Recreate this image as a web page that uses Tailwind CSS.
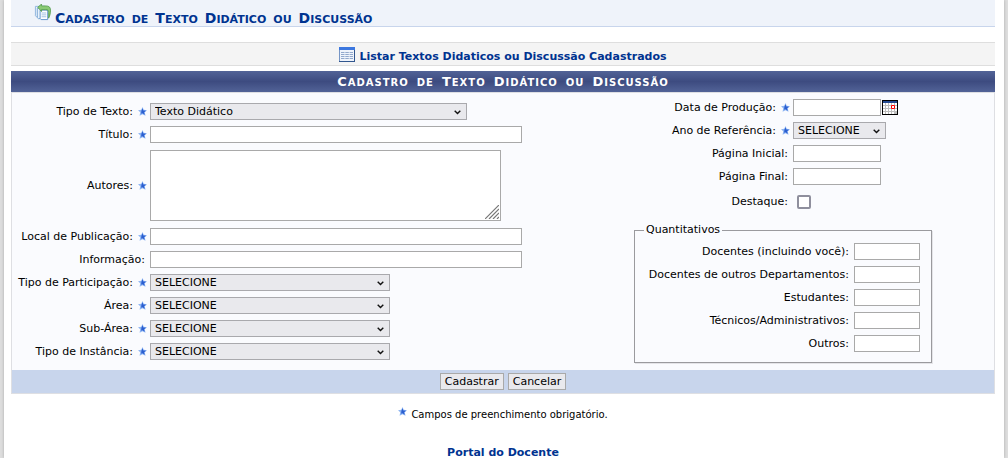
<!DOCTYPE html>
<html lang="pt-BR">
<head>
<meta charset="utf-8">
<meta name="viewport" content="width=device-width, initial-scale=1">
<title>Cadastro de Texto Didático ou Discussão</title>
<script src="https://cdn.jsdelivr.net/npm/@tailwindcss/browser@4"></script>
</head>
<body class="bg-[#dedede] font-[Verdana,'DejaVu_Sans',sans-serif] text-[11px] leading-4 text-black">
<svg class="hidden" aria-hidden="true">
  <symbol id="star" viewBox="0 0 9 9">
    <path d="M4.500 0 5.700 2.700 9 3.200 6.800 5.300 7.500 8.800 4.500 7.300 1.600 8.800 2.200 5.300 0 3.200 3.300 2.700Z" fill="#8db4f2"/>
    <path d="M4.500 1.200 5.300 3.400 8 3.700 6 5.300 6.700 7.800 4.500 6.300 3.100 6.800 3.400 3.800Z" fill="#2b5fd0"/>
  </symbol>
  <symbol id="chevron" viewBox="0 0 7 5">
    <path d="M.7.8 3.500 3.600 6.300.8" fill="none" stroke="#111" stroke-width="1.400"/>
  </symbol>
</svg>
<div class="mx-1 min-h-screen bg-white pr-[9px] pl-[7px] shadow-[0_0_3px_#aaa]">
  <header>
    <h1 class="flex h-[27px] items-start gap-1 border-b border-[#c8d5ec] bg-[#eff3fa] pl-[23px] text-[11px] font-bold text-[#003390]">
      <svg class="mt-1 size-[17px]" viewBox="0 0 18 18" aria-hidden="true">
        <path d="M1.500 2.500h10v11h-9l-1-1z" fill="#e9f2fb" stroke="#8db5dd"/>
        <path d="M3.500 4.500h10v11h-9l-1-1z" fill="#e9f2fb" stroke="#79a6d3"/>
        <path d="M6.500 6.500h8v10h-7l-1-1z" fill="#fff" stroke="#6094cb"/>
        <path d="M8 9.500h5M8 11.500h5M8 13.500h5" stroke="#9dbfe0"/>
        <path d="M4 3.500 8 0V2h4.500c3.500 0 5 1.500 5 4.500 0 3-.5 5.500-2 8.500V9c0-2-.5-3-3-3H8v2Z" fill="#8aca74" stroke="#3e8d37" stroke-width=".7"/>
      </svg>
      <span class="mt-2 flex items-baseline gap-[7px] uppercase"><span class="block first-letter:text-sm">Cadastro</span> <span>de</span> <span class="block first-letter:text-sm">Texto</span> <span class="block first-letter:text-sm">Didático</span> <span>ou</span> <span class="block first-letter:text-sm">Discussão</span></span>
    </h1>
  </header>
  <nav class="mt-[15px] flex h-6 items-center justify-center gap-1 border-y border-[#dedede] bg-[#f4f4f4] font-bold">
    <svg class="h-[15px] w-4" viewBox="0 0 16 15" aria-hidden="true">
      <path d="M0 0h16v15H0z" fill="#eef3fb"/>
      <path d="M.5.5h15v14H.5z" fill="none" stroke="#7695c5"/>
      <path d="M0 0h16v3H0z" fill="#3c77df"/>
      <path d="M0 14.500h16M15.500 3v12" stroke="#31568e"/>
      <path d="M2 5.500h12M2 7.500h12M2 9.500h12M2 11.500h12" stroke="#91a8cc" stroke-dasharray="3.500 .8"/>
    </svg>
    <a href="#" class="mt-[6px] text-[#003390]">Listar Textos Didaticos ou Discussão Cadastrados</a>
  </nav>
  <main class="mt-[5px]">
    <form>
      <h2 class="flex h-[21px] items-baseline justify-center gap-[8px] bg-linear-to-b from-[#526397] via-[#3d4b80] to-[#526397] text-[10px] leading-[21px] font-bold tracking-[1px] text-white uppercase"><span class="block first-letter:text-[13px]">Cadastro</span> <span>de</span> <span class="block first-letter:text-[13px]">Texto</span> <span class="block first-letter:text-[13px]">Didático</span> <span>ou</span> <span class="block first-letter:text-[13px]">Discussão</span></h2>
      <div class="border border-[#dedfe3] bg-[#fafbfe]">
        <div class="flex min-h-[277px] justify-between">
          <div class="grid w-[512px] shrink-0 auto-rows-min grid-cols-[135px_1fr] items-center gap-x-[3px] gap-y-[6px] pt-[10px]">
            <label for="tipo" class="flex items-center justify-end gap-[5px] whitespace-nowrap">Tipo de Texto:<svg class="size-[9px]"><use href="#star"/></svg></label>
            <div class="relative w-[317px]"><select id="tipo" class="block h-[17px] w-full appearance-none border border-[#a9a9ad] bg-[#e9e9ed] px-1 leading-[15px]"><option>Texto Didático</option></select><svg class="pointer-events-none absolute top-[7px] right-[6px] h-[5px] w-[7px]"><use href="#chevron"/></svg></div>

            <label for="titulo" class="flex items-center justify-end gap-[5px] whitespace-nowrap">Título:<svg class="size-[9px]"><use href="#star"/></svg></label>
            <input id="titulo" type="text" class="h-[17px] w-[372px] border border-[#a9a9a9] bg-white px-1">

            <label for="autores" class="flex items-center justify-end gap-[5px] whitespace-nowrap">Autores:<svg class="size-[9px]"><use href="#star"/></svg></label>
            <div class="relative my-px w-[351px]"><textarea id="autores" class="block h-[71px] w-full resize-none border border-[#a9a9a9] bg-white px-1"></textarea><svg class="pointer-events-none absolute right-[2px] bottom-[2px] size-[14px]" viewBox="0 0 14 14"><path d="M0 14 14 0M4 14 14 4M8 14 14 8M12 14 14 12" stroke="#777" stroke-width="1.200"/></svg></div>

            <label for="local" class="flex items-center justify-end gap-[5px] whitespace-nowrap">Local de Publicação:<svg class="size-[9px]"><use href="#star"/></svg></label>
            <input id="local" type="text" class="h-[17px] w-[372px] border border-[#a9a9a9] bg-white px-1">

            <label for="info" class="pr-[2px] text-right whitespace-nowrap">Informação:</label>
            <input id="info" type="text" class="h-[17px] w-[372px] border border-[#a9a9a9] bg-white px-1">

            <label for="participacao" class="flex items-center justify-end gap-[5px] whitespace-nowrap">Tipo de Participação:<svg class="size-[9px]"><use href="#star"/></svg></label>
            <div class="relative w-60"><select id="participacao" class="block h-[17px] w-full appearance-none border border-[#a9a9ad] bg-[#e9e9ed] px-1 leading-[15px]"><option>SELECIONE</option></select><svg class="pointer-events-none absolute top-[7px] right-[6px] h-[5px] w-[7px]"><use href="#chevron"/></svg></div>

            <label for="area" class="flex items-center justify-end gap-[5px] whitespace-nowrap">Área:<svg class="size-[9px]"><use href="#star"/></svg></label>
            <div class="relative w-60"><select id="area" class="block h-[17px] w-full appearance-none border border-[#a9a9ad] bg-[#e9e9ed] px-1 leading-[15px]"><option>SELECIONE</option></select><svg class="pointer-events-none absolute top-[7px] right-[6px] h-[5px] w-[7px]"><use href="#chevron"/></svg></div>

            <label for="subarea" class="flex items-center justify-end gap-[5px] whitespace-nowrap">Sub-Área:<svg class="size-[9px]"><use href="#star"/></svg></label>
            <div class="relative w-60"><select id="subarea" class="block h-[17px] w-full appearance-none border border-[#a9a9ad] bg-[#e9e9ed] px-1 leading-[15px]"><option>SELECIONE</option></select><svg class="pointer-events-none absolute top-[7px] right-[6px] h-[5px] w-[7px]"><use href="#chevron"/></svg></div>

            <label for="instancia" class="flex items-center justify-end gap-[5px] whitespace-nowrap">Tipo de Instância:<svg class="size-[9px]"><use href="#star"/></svg></label>
            <div class="relative w-60"><select id="instancia" class="block h-[17px] w-full appearance-none border border-[#a9a9ad] bg-[#e9e9ed] px-1 leading-[15px]"><option>SELECIONE</option></select><svg class="pointer-events-none absolute top-[7px] right-[6px] h-[5px] w-[7px]"><use href="#chevron"/></svg></div>
          </div>

          <div class="mr-[62px] w-[298px] shrink-0 pt-[6px]">
            <div class="grid grid-cols-[156px_1fr] items-center gap-x-[3px] gap-y-[6px]">
              <label for="data" class="flex items-center justify-end gap-[5px] whitespace-nowrap">Data de Produção:<svg class="size-[9px]"><use href="#star"/></svg></label>
              <div class="flex items-center gap-px">
                <input id="data" type="text" class="h-[17px] w-[88px] border border-[#a9a9a9] bg-white px-1">
                <button type="button" aria-label="Calendário"><svg class="block h-[15px] w-4" viewBox="0 0 16 15">
                  <path d="M0 0h16v15H0z" fill="#000"/><path d="M1 1h14v2H1z" fill="#244a91"/><path d="M1 3h14v11H1z" fill="#bdbdbd"/>
                  <path d="M1 3h2v2H1zM4 3h2v2H4zM7 3h2v2H7zM10 3h2v2h-2zM13 3h2v2h-2zM1 6h2v2H1zM4 6h2v2H4zM7 6h2v2H7zM13 6h2v2h-2zM1 9h2v2H1zM4 9h2v2H4zM7 9h2v2H7zM10 9h2v2h-2zM13 9h2v2h-2zM1 12h2v2H1zM4 12h2v2H4zM7 12h2v2H7zM10 12h2v2h-2z" fill="#fff"/>
                  <path d="M9.500 5.500h3v3h-3z" fill="#fff" stroke="#f00"/>
                </svg></button>
              </div>
              <label for="ano" class="flex items-center justify-end gap-[5px] whitespace-nowrap">Ano de Referência:<svg class="size-[9px]"><use href="#star"/></svg></label>
              <div class="relative w-[93px]"><select id="ano" class="block h-[17px] w-full appearance-none border border-[#a9a9ad] bg-[#e9e9ed] px-1 leading-[15px]"><option>SELECIONE</option></select><svg class="pointer-events-none absolute top-[7px] right-[6px] h-[5px] w-[7px]"><use href="#chevron"/></svg></div>
              <label for="pini" class="pr-[2px] text-right">Página Inicial:</label>
              <input id="pini" type="text" class="h-[17px] w-[88px] border border-[#a9a9a9] bg-white px-1">
              <label for="pfim" class="pr-[2px] text-right">Página Final:</label>
              <input id="pfim" type="text" class="h-[17px] w-[88px] border border-[#a9a9a9] bg-white px-1">
              <label for="destaque" class="mt-[3px] pr-[2px] text-right">Destaque:</label>
              <input id="destaque" type="checkbox" class="mt-[2px] ml-1 size-[14px] appearance-none rounded-[2px] border-2 border-[#8f8f9d] bg-white checked:bg-[#0060df]">
            </div>
            <fieldset class="mt-[12px] border border-[#9a9a9e] px-[8px] pb-[10px] shadow-[1px_1px_0_#e4e4e8]">
              <legend class="ml-px px-[2px]">Quantitativos</legend>
              <div class="grid grid-cols-[1fr_66px] items-center gap-x-[5px] gap-y-[6px] pt-[5px] pr-[3px]">
                <label for="q1" class="text-right whitespace-nowrap">Docentes (incluindo você):</label>
                <input id="q1" type="text" class="h-[17px] w-full border border-[#a9a9a9] bg-white px-1">
                <label for="q2" class="text-right whitespace-nowrap">Docentes de outros Departamentos:</label>
                <input id="q2" type="text" class="h-[17px] w-full border border-[#a9a9a9] bg-white px-1">
                <label for="q3" class="text-right whitespace-nowrap">Estudantes:</label>
                <input id="q3" type="text" class="h-[17px] w-full border border-[#a9a9a9] bg-white px-1">
                <label for="q4" class="text-right whitespace-nowrap">Técnicos/Administrativos:</label>
                <input id="q4" type="text" class="h-[17px] w-full border border-[#a9a9a9] bg-white px-1">
                <label for="q5" class="text-right whitespace-nowrap">Outros:</label>
                <input id="q5" type="text" class="h-[17px] w-full border border-[#a9a9a9] bg-white px-1">
              </div>
            </fieldset>
          </div>
        </div>
        <div class="flex h-[23px] items-center justify-center gap-1 bg-[#c8d5ec]">
          <button type="submit" class="h-[17px] border border-[#a9a9a9] bg-[#e9e9ed] px-1 leading-[15px]">Cadastrar</button>
          <button type="button" class="h-[17px] border border-[#a9a9a9] bg-[#e9e9ed] px-1 leading-[15px]">Cancelar</button>
        </div>
      </div>
    </form>
    <p class="mt-[11px] flex items-start justify-center gap-1 text-[10px]"><svg class="mt-[2px] size-[9px]"><use href="#star"/></svg><span class="mt-[2px]">Campos de preenchimento obrigatório.</span></p>
    <p class="mt-[22px] h-3 text-center font-bold"><a href="#" class="text-[#003390]">Portal do Docente</a></p>
  </main>
</div>
</body>
</html>
